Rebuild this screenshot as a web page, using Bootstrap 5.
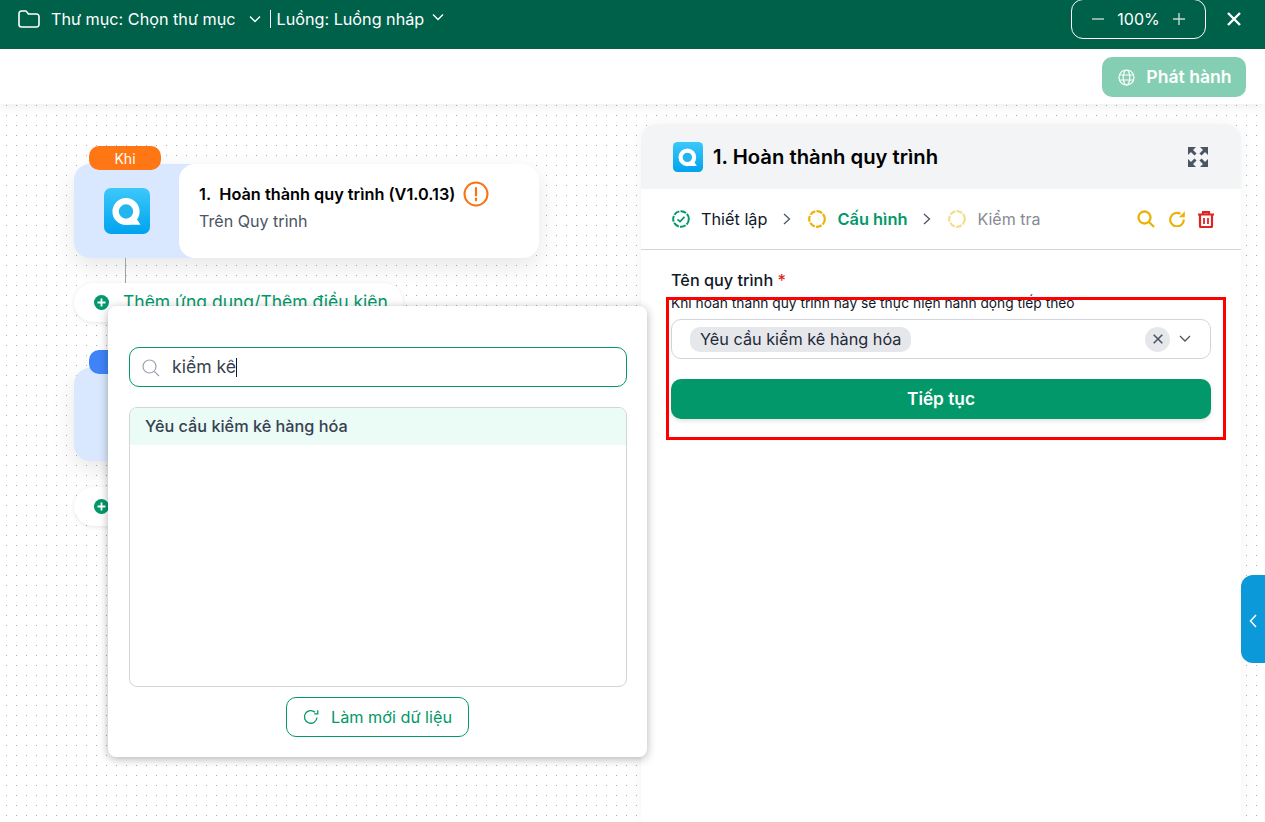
<!DOCTYPE html>
<html lang="vi">
<head>
<meta charset="utf-8">
<title>Luồng</title>
<link href="https://cdn.jsdelivr.net/npm/bootstrap@5.3.0/dist/css/bootstrap.min.css" rel="stylesheet">
<style>
html,body{height:100%;}
body{font-family:Inter,"Noto Sans",sans-serif;overflow:hidden;background:#fff;color:#111827;width:1265px;height:822px;}
.topbar{height:49px;background:#00614a;color:#fff;font-size:16.2px;padding:0 24px 11px 18px;}
.tb-folder{margin-right:11px;}
.tb-sep{width:1px;height:18px;background:#fff;margin:0 6px 0 9px;}
.tb-chev{margin-left:13px;}
.tb-chev-up{margin-left:8px;margin-top:-5px;}
.zoombox{width:135px;height:40px;flex:none;border:1px solid #fff;border-radius:12px;margin-right:21px;font-size:16px;}
.subbar{height:55px;background:#fff;padding:8px 19px 0 0;box-shadow:0 4px 8px rgba(0,0,0,.06);position:relative;z-index:2;}
.publish{width:144px;height:40px;border-radius:10px;background:#84cfb3;color:#fff;font-weight:600;font-size:17.6px;gap:11px;border:0;padding-left:2px!important;}
.stage{height:718px;position:relative;background-color:#fff;background-image:radial-gradient(circle at .5px .5px,#a9adb2 .7px,transparent .8px);background-size:10px 10px;background-position:6px 1px;overflow:hidden;}
.node{position:absolute;left:74px;width:465px;border-radius:16px;background:#d9e8fe;box-shadow:0 8px 24px rgba(0,0,0,.1);}
.node-a{top:60px;height:94px;}
.node-b{top:264px;height:93px;}
.node-logo{width:105px;}
.node-body{background:#fff;border-radius:16px;padding:17px 20px 0 21px;}
.node-title{font-size:16.3px;font-weight:600;color:#000;line-height:24px;margin-left:-1px;}
.node-sub{font-size:16.1px;color:#4b5563;line-height:20px;margin-top:4px;margin-left:-1px;}
.tag{position:absolute;left:15px;top:-18px;width:72px;height:24px;border-radius:10px;color:#fff;font-size:14px;line-height:25px;text-align:center;}
.tag-o{background:#ff7614;}
.tag-b{background:#3f83f8;}
.wire{position:absolute;left:125px;top:154px;width:1px;height:25px;background:#9ca3af;}
.addpill{position:absolute;left:74px;width:329px;height:39px;border-radius:20px;background:#fff;box-shadow:0 1px 5px rgba(0,0,0,.1);padding-left:20px;gap:14px;color:#03986a;font-size:17.5px;}
.add-a{top:179px;}
.add-b{top:383px;}
.picker{position:absolute;left:108px;top:202px;width:539px;height:451px;background:#fff;border-radius:8px;box-shadow:0 2px 10px rgba(0,0,0,.3);padding:41px 20px 0 21px;z-index:5;}
.searchbox{height:40px;border:1px solid #03986a;border-radius:10px;padding:1px 0 0 12px;gap:12px;font-size:17.6px;color:#374151;}
.caret-bar{display:inline-block;width:1px;height:19px;background:#111827;vertical-align:-4px;}
.resultbox{height:280px;margin-top:20px;border:1px solid #d1d5db;border-radius:8px;overflow:hidden;}
.result-row{height:37px;background:#ebfbf5;font-weight:500;font-size:16.25px;padding-left:15px;color:#374151;}
.refresh-wrap{margin-right:1px;}
.refresh{width:183px;height:40px;border:1px solid #03986a;border-radius:10px;background:#fff;color:#03986a;font-size:16.25px;gap:12px;margin-top:10px;}
.panel{position:absolute;left:641px;top:20px;width:600px;bottom:0;background:#fff;border-radius:16px 16px 0 0;box-shadow:0 0 16px rgba(0,0,0,.05);z-index:3;}
.panel-head{height:65px;background:#f3f4f6;border-radius:16px 16px 0 0;padding:1px 33px 0 32px;gap:10px;}
.panel-title{font-size:20.25px;font-weight:600;color:#000;}
.steps{height:61px;border-bottom:1px solid #d1d5db;padding:0 27px 0 31px;font-size:16.25px;}
.step{gap:11px;}
.step-on{color:#03986a;font-weight:600;font-size:16.4px;}
.step-off{color:#868a92;font-size:16px;}
.chev{margin:0 17px 0 16px;}
.tools{gap:13.5px;}
.panel-body{padding:21px 30px 0 30px;}
.field-label{font-size:16.25px;font-weight:500;line-height:19px;color:#111827;}
.req{color:#e02424;}
.field-help{font-size:13.75px;line-height:15px;margin-top:6px;color:#111827;}
.selectbox{height:40px;margin-top:8px;border:1px solid #d1d5db;border-radius:10px;padding:0 19px 0 18px;}
.chip{height:25px;border-radius:10px;background:#e5e7eb;padding:0 10px;font-size:16.25px;color:#1f2937;line-height:24px;}
.clearbtn{width:25px;height:25px;border-radius:50%;background:#e5e7eb;margin-right:9px;}
.continue{height:40px;margin-top:20px;border-radius:10px;background:#03986a;color:#fff;font-weight:600;font-size:17.3px;box-shadow:0 2px 4px rgba(0,0,0,.12);border:0;width:100%;}
.redmark{position:absolute;left:666px;top:193px;width:560px;height:143px;border:3px solid #f00;z-index:6;pointer-events:none;}
.sidetab{position:absolute;right:0;top:471px;width:24px;height:88px;background:#0c99d9;border-radius:12px 0 0 12px;z-index:6;padding-top:4px;}
</style>
</head>
<body>
<div class="topbar d-flex align-items-center">
  <svg class="tb-folder" width="22" height="18" viewBox="0 0 22 18" fill="none" stroke="#fff" stroke-width="1.600" stroke-linejoin="round"><path d="M1 3.500A2.500 2.500 0 0 1 3.500 1H8l2.500 3h8A2.500 2.500 0 0 1 21 6.500v8A2.500 2.500 0 0 1 18.500 17h-15A2.500 2.500 0 0 1 1 14.500z"/></svg>
  <span>Thư mục: Chọn thư mục</span>
  <svg class="tb-chev" width="12" height="8" viewBox="0 0 12 8" fill="none" stroke="#fff" stroke-width="1.300"><path d="M1 1.500l5 5 5-5"/></svg>
  <span class="tb-sep"></span>
  <span>Luồng: Luồng nháp</span>
  <svg class="tb-chev-up" width="12" height="8" viewBox="0 0 12 8" fill="none" stroke="#fff" stroke-width="1.300"><path d="M1 1.500l5 5 5-5"/></svg>
  <div class="ms-auto d-flex align-items-center">
    <div class="zoombox d-flex align-items-center justify-content-center gap-2">
      <svg width="14" height="14" viewBox="0 0 14 14" stroke="#c9d6d2" stroke-width="1.400"><path d="M1 7h12"/></svg>
      <span class="px-1">100%</span>
      <svg width="14" height="14" viewBox="0 0 14 14" stroke="#c9d6d2" stroke-width="1.400"><path d="M1 7h12M7 1v12"/></svg>
    </div>
    <svg width="14" height="14" viewBox="0 0 14 14" stroke="#fff" stroke-width="2.400"><path d="M1 1l12 12M13 1L1 13"/></svg>
  </div>
</div>
<div class="subbar d-flex justify-content-end">
  <button type="button" class="publish btn d-flex align-items-center justify-content-center p-0">
    <svg width="17" height="17" viewBox="0 0 17 17" fill="none" stroke="#fff" stroke-width="1.200"><circle cx="8.500" cy="8.500" r="7.500"/><ellipse cx="8.500" cy="8.500" rx="3.300" ry="7.500"/><path d="M1.500 6h14M1.500 11h14"/></svg>
    Phát hành
  </button>
</div>
<div class="stage">
  <div class="node node-a d-flex">
    <span class="tag tag-o">Khi</span>
    <div class="node-logo d-flex align-items-center justify-content-center">
      <svg width="46" height="46" viewBox="0 0 46 46"><defs><linearGradient id="qa" x1="0" y1="0" x2="0" y2="1"><stop offset="0" stop-color="#3cc8fb"/><stop offset="1" stop-color="#00a3ee"/></linearGradient></defs><rect width="46" height="46" rx="7" fill="url(#qa)"/><circle cx="22" cy="23.500" r="10.400" fill="#24b5ee" stroke="#fff" stroke-width="6.400"/><path d="M21 36.800h15.500L31 28z" fill="#fff"/></svg>
    </div>
    <div class="node-body flex-grow-1">
      <div class="node-title d-flex align-items-center gap-2"><span>1.&nbsp; Hoàn thành quy trình (V1.0.13)</span>
        <svg width="26" height="26" viewBox="0 0 26 26" fill="none" stroke="#f97316" stroke-width="2"><circle cx="13" cy="13" r="11.500"/><path d="M13 7v7.500M13 17.500v1.800" stroke-linecap="round" stroke-width="2.200"/></svg>
      </div>
      <div class="node-sub">Trên Quy trình</div>
    </div>
  </div>
  <div class="wire"></div>
  <div class="addpill add-a d-flex align-items-center">
    <svg width="15" height="15" viewBox="0 0 15 15"><circle cx="7.500" cy="7.500" r="7.500" fill="#03986a"/><path d="M7.500 3.500v8M3.500 7.500h8" stroke="#fff" stroke-width="1.800"/></svg>
    <span>Thêm ứng dụng/Thêm điều kiện</span>
  </div>
  <div class="node node-b"><span class="tag tag-b">Thì</span></div>
  <div class="addpill add-b d-flex align-items-center">
    <svg width="15" height="15" viewBox="0 0 15 15"><circle cx="7.500" cy="7.500" r="7.500" fill="#03986a"/><path d="M7.500 3.500v8M3.500 7.500h8" stroke="#fff" stroke-width="1.800"/></svg>
  </div>

  <div class="picker">
    <div class="searchbox d-flex align-items-center">
      <svg width="18" height="18" viewBox="0 0 18 18" fill="none" stroke="#9ca3af" stroke-width="1.200"><circle cx="7.500" cy="7.500" r="6.500"/><path d="M12.300 12.300L17 17"/></svg>
      <span>kiểm kê<span class="caret-bar"></span></span>
    </div>
    <div class="resultbox">
      <div class="result-row d-flex align-items-center">Yêu cầu kiểm kê hàng hóa</div>
    </div>
    <div class="refresh-wrap d-flex justify-content-center">
      <button type="button" class="refresh btn d-flex align-items-center justify-content-center p-0">
        <svg width="16" height="16" viewBox="0 0 16 16" fill="none" stroke="#03986a" stroke-width="1.300"><path d="M14 8.500A6.300 6.300 0 1 1 12 3.300"/><path d="M14.800 1.300v3.600h-3.600" /></svg>
        Làm mới dữ liệu
      </button>
    </div>
  </div>

  <div class="panel">
    <div class="panel-head d-flex align-items-center">
      <svg width="30" height="30" viewBox="0 0 46 46"><defs><linearGradient id="qb" x1="0" y1="0" x2="0" y2="1"><stop offset="0" stop-color="#3cc8fb"/><stop offset="1" stop-color="#00a3ee"/></linearGradient></defs><rect width="46" height="46" rx="7" fill="url(#qb)"/><circle cx="22" cy="23.500" r="10.400" fill="#24b5ee" stroke="#fff" stroke-width="6.400"/><path d="M21 36.800h15.500L31 28z" fill="#fff"/></svg>
      <span class="panel-title">1. Hoàn thành quy trình</span>
      <svg class="ms-auto" width="20" height="20" viewBox="0 0 20 20" fill="#4b5563" stroke="none"><path d="M0 0h8L0 8zM20 0v8l-8-8zM0 20v-8l8 8zM20 20h-8l8-8z"/><path d="M3 3l4.500 4.500M17 3l-4.500 4.500M3 17l4.500-4.500M17 17l-4.500-4.500" stroke="#4b5563" stroke-width="3"/></svg>
    </div>
    <div class="steps d-flex align-items-center">
      <div class="step d-flex align-items-center">
        <svg width="18" height="18" viewBox="0 0 18 18" fill="none" stroke="#03986a" stroke-width="2"><circle cx="9" cy="9" r="7.800" stroke-dasharray="6 1.200"/><path d="M5.500 9.300l2.500 2.300 4.500-4.800" stroke-width="1.700"/></svg>
        <span>Thiết lập</span>
      </div>
      <svg class="chev" width="8" height="12" viewBox="0 0 8 12" fill="none" stroke="#4b5563" stroke-width="1.300"><path d="M1 1l5.500 5L1 11"/></svg>
      <div class="step step-on d-flex align-items-center">
        <svg width="18" height="18" viewBox="0 0 18 18" fill="none" stroke="#eab308" stroke-width="2.200"><circle cx="9" cy="9" r="7.800" stroke-dasharray="6 1.200"/></svg>
        <span>Cấu hình</span>
      </div>
      <svg class="chev" width="8" height="12" viewBox="0 0 8 12" fill="none" stroke="#4b5563" stroke-width="1.300"><path d="M1 1l5.500 5L1 11"/></svg>
      <div class="step step-off d-flex align-items-center">
        <svg width="18" height="18" viewBox="0 0 18 18" fill="none" stroke="#f5dc8e" stroke-width="2.200"><circle cx="9" cy="9" r="7.800" stroke-dasharray="6 1.200"/></svg>
        <span>Kiểm tra</span>
      </div>
      <div class="tools ms-auto d-flex align-items-center">
        <svg width="18" height="18" viewBox="0 0 18 18" fill="none" stroke="#eab308" stroke-width="2.300"><circle cx="7.500" cy="7.500" r="6"/><path d="M12 12l5 5"/></svg>
        <svg width="16" height="16" viewBox="0 0 16 16" fill="none" stroke="#eab308" stroke-width="2.200"><path d="M14.800 8.500A6.800 6.800 0 1 1 11.500 2.800"/><path d="M9.800 6.300H15.800V.3z" fill="#eab308" stroke="none"/></svg>
        <svg width="16" height="17" viewBox="0 0 16 17" fill="none" stroke="#e02424" stroke-width="2.200"><path d="M0 3.500h16M5 3.500V1.200h6v2.300"/><path d="M2 3.500v11.500a1.200 1.200 0 0 0 1.200 1.200h9.600a1.200 1.200 0 0 0 1.200-1.200V3.500"/><path d="M6 7v6M10 7v6" stroke-width="1.800"/></svg>
      </div>
    </div>
    <div class="panel-body">
      <div class="field-label">Tên quy trình <span class="req">*</span></div>
      <div class="field-help">Khi hoàn thành quy trình này sẽ thực hiện hành động tiếp theo</div>
      <div class="selectbox d-flex align-items-center">
        <span class="chip">Yêu cầu kiểm kê hàng hóa</span>
        <span class="clearbtn ms-auto d-flex align-items-center justify-content-center">
          <svg width="10" height="10" viewBox="0 0 10 10" stroke="#4b5563" stroke-width="1.600"><path d="M.7.7l8.600 8.600M9.300.7L.7 9.300"/></svg>
        </span>
        <svg width="12" height="8" viewBox="0 0 12 8" fill="none" stroke="#4b5563" stroke-width="1.300"><path d="M1 1l5 5 5-5"/></svg>
      </div>
      <button type="button" class="continue btn d-block p-0">Tiếp tục</button>
    </div>
  </div>
  <div class="redmark"></div>
  <div class="sidetab d-flex align-items-center justify-content-center">
    <svg width="8" height="14" viewBox="0 0 8 14" fill="none" stroke="#fff" stroke-width="1.500"><path d="M7 1L1.500 7 7 13"/></svg>
  </div>
</div>
<script src="https://cdn.jsdelivr.net/npm/bootstrap@5.3.0/dist/js/bootstrap.bundle.min.js"></script>
</body>
</html>
